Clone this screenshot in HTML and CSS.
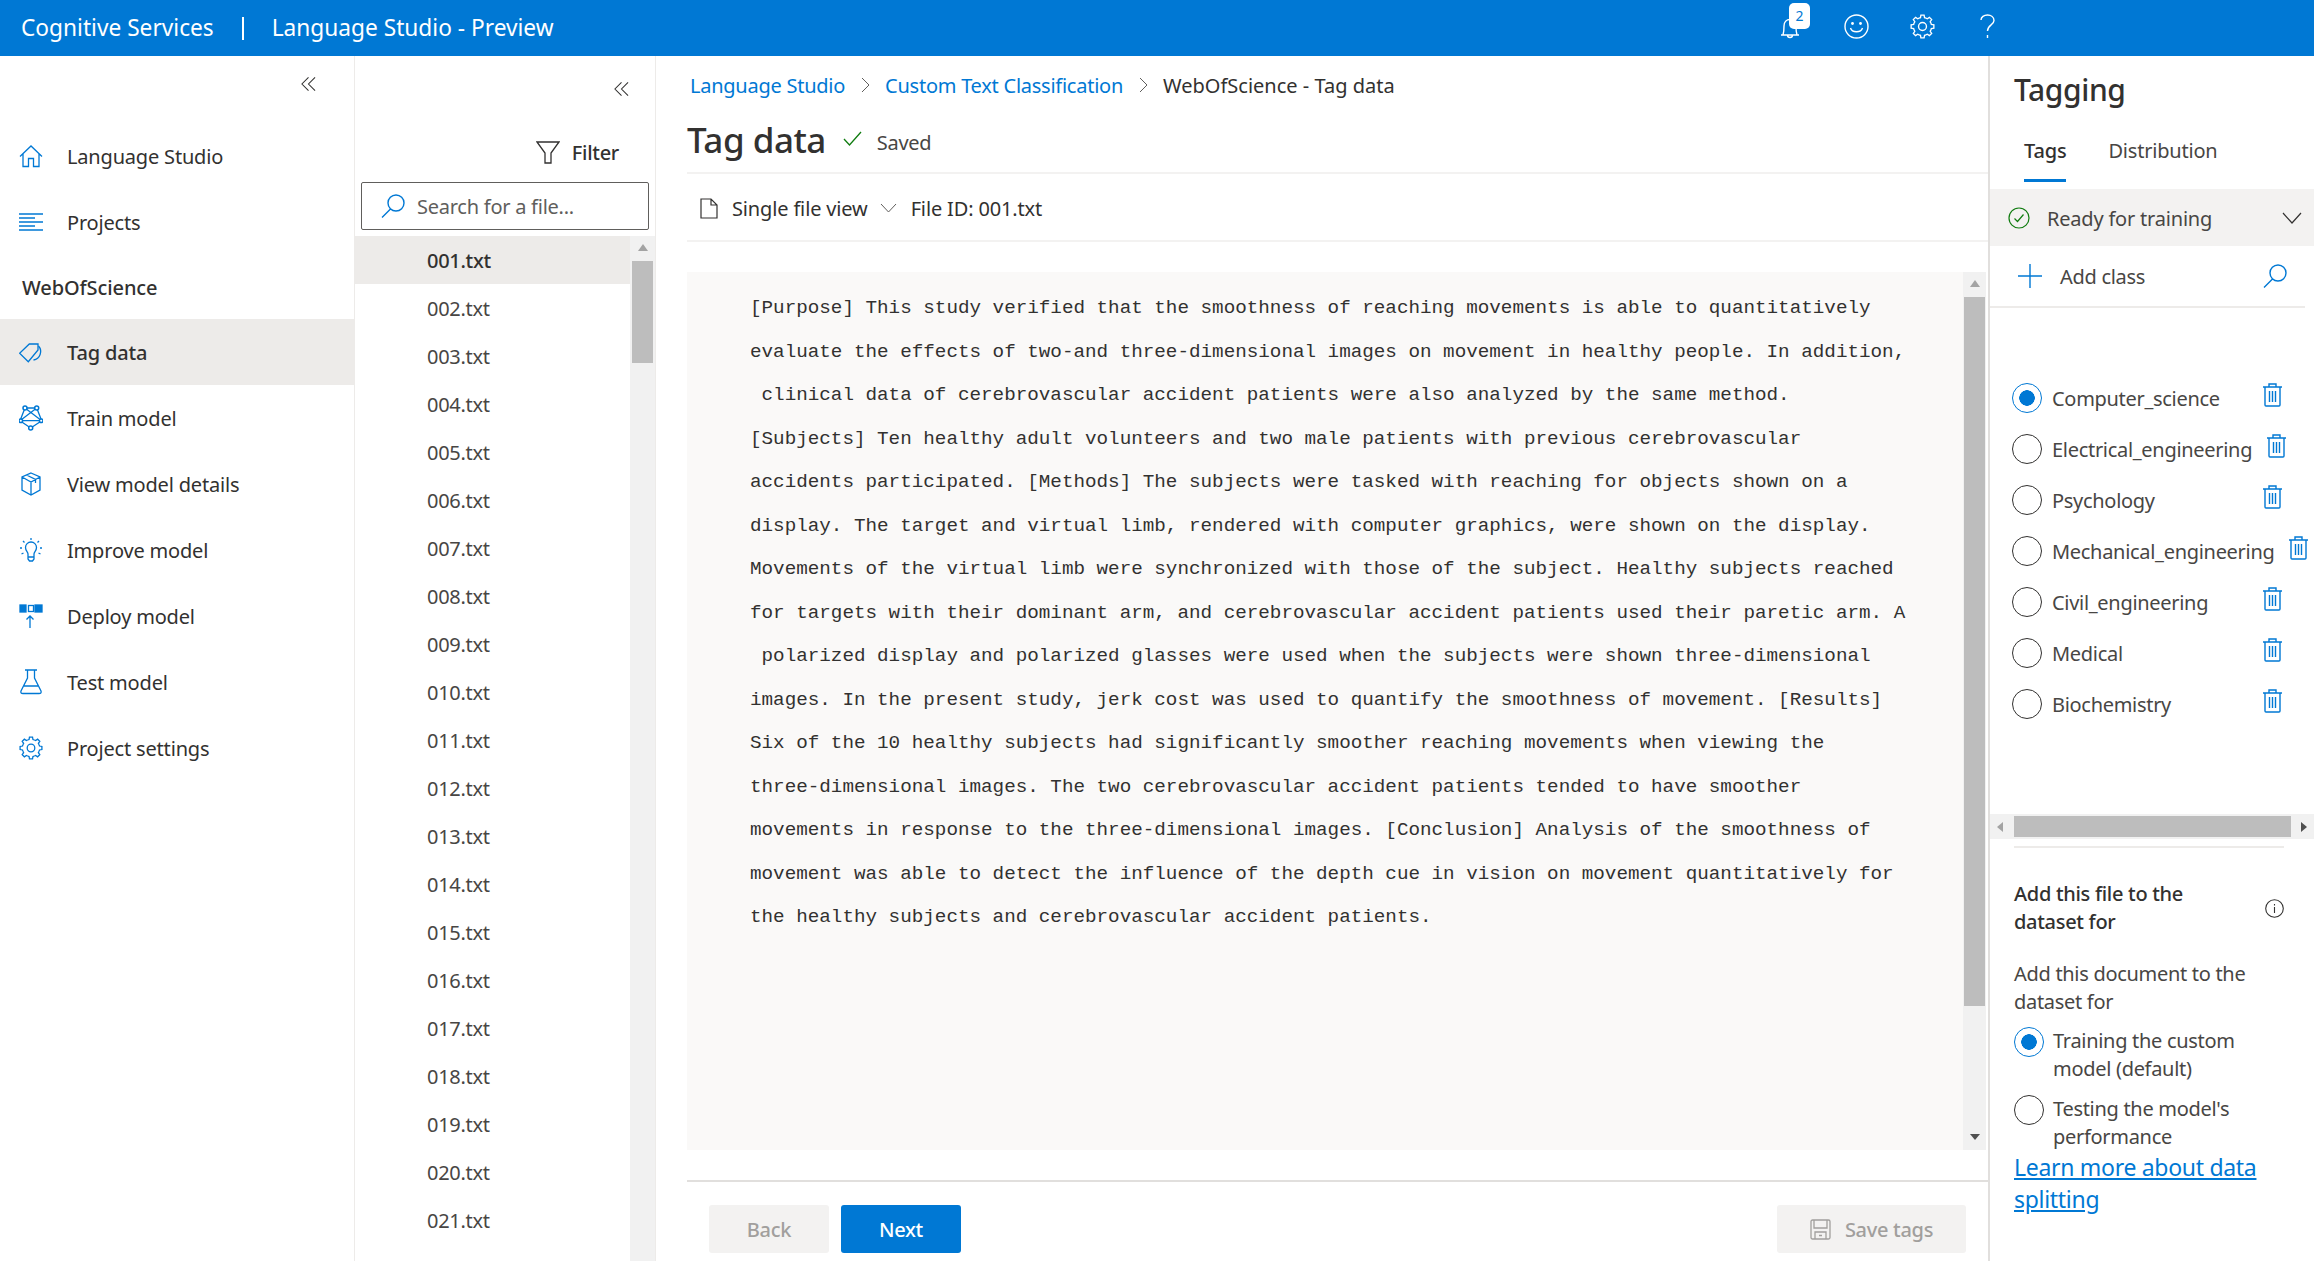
FILE: index.html
```html
<!DOCTYPE html>
<html lang="en">
<head>
    <meta charset="UTF-8">
    <title>Language Studio - Preview</title>
    <link rel="stylesheet" href="styles.css">
</head>
<body>
    <svg class="defs" width="0" height="0">
        <symbol id="gear" viewBox="0 0 24 24">
            <g fill="none" stroke="currentColor" stroke-width="1.3">
                <path d="M8.67 3.96L10.04 3.52L10.47 1.1H13.53L13.96 3.52L15.33 3.96"/>
                <path transform="rotate(45 12 12)" d="M8.67 3.96L10.04 3.52L10.47 1.1H13.53L13.96 3.52L15.33 3.96"/>
                <path transform="rotate(90 12 12)" d="M8.67 3.96L10.04 3.52L10.47 1.1H13.53L13.96 3.52L15.33 3.96"/>
                <path transform="rotate(135 12 12)" d="M8.67 3.96L10.04 3.52L10.47 1.1H13.53L13.96 3.52L15.33 3.96"/>
                <path transform="rotate(180 12 12)" d="M8.67 3.96L10.04 3.52L10.47 1.1H13.53L13.96 3.52L15.33 3.96"/>
                <path transform="rotate(225 12 12)" d="M8.67 3.96L10.04 3.52L10.47 1.1H13.53L13.96 3.52L15.33 3.96"/>
                <path transform="rotate(270 12 12)" d="M8.67 3.96L10.04 3.52L10.47 1.1H13.53L13.96 3.52L15.33 3.96"/>
                <path transform="rotate(315 12 12)" d="M8.67 3.96L10.04 3.52L10.47 1.1H13.53L13.96 3.52L15.33 3.96"/>
                <circle cx="12" cy="12" r="3.8"/>
            </g>
        </symbol>
        <symbol id="trash" viewBox="0 0 19 24">
            <path fill="none" stroke="currentColor" stroke-width="1.4" d="M0 4H19M6 4V1H13V4M2 4V22A1 1 0 0 0 3 23H16A1 1 0 0 0 17 22V4M6.5 8V19M9.5 8V19M12.5 8V19"/>
        </symbol>
        <symbol id="lens" viewBox="0 0 24 24">
            <path fill="none" stroke="currentColor" stroke-width="1.4" d="M15 1A8 8 0 1 1 15 17A8 8 0 1 1 15 1ZM9.5 15L1 23.5"/>
        </symbol>
        <symbol id="dblchev" viewBox="0 0 16 16">
            <path fill="none" stroke="currentColor" stroke-width="1.1" d="M8 1L1 8L8 15M15 1L8 8L15 15"/>
        </symbol>
    </svg>

    <header class="topbar">
        <span class="brand">Cognitive Services</span>
        <span class="brand-sep"></span>
        <span class="brand">Language Studio - Preview</span>
        <div class="top-icons">
            <span class="bell">
                <svg width="20" height="22" viewBox="0 0 20 22"><path fill="none" stroke="#fff" stroke-width="1.4" d="M1 18H19M3 18C4 15 4 12 4 9C4 5 6.5 2.5 10 2.5C13.5 2.5 16 5 16 9C16 12 16 15 17 18M7.5 18A2.5 2.5 0 0 0 12.5 18"/></svg>
                <span class="badge">2</span>
            </span>
            <svg class="top-smile" width="25" height="25" viewBox="0 0 25 25"><g fill="none" stroke="#fff" stroke-width="1.4"><circle cx="12.5" cy="12.5" r="11.5"/><path d="M6.5 14C8 19 17 19 18.5 14"/></g><circle cx="8.5" cy="9.5" r="1.4" fill="#fff"/><circle cx="16.5" cy="9.5" r="1.4" fill="#fff"/></svg>
            <svg class="top-gear" width="25" height="25"><use href="#gear"/></svg>
            <svg class="top-help" width="15" height="25" viewBox="0 0 15 25"><path fill="none" stroke="#fff" stroke-width="1.4" d="M1 6C1 3 4 1 7.5 1C11 1 14 3 14 6.5C14 11 7.5 11 7.5 17M7.5 21V24"/></svg>
        </div>
    </header>

    <div class="app">
        <nav class="sidenav">
            <div class="collapse-row">
                <svg class="dblchev" width="15" height="16"><use href="#dblchev"/></svg>
            </div>
            <a class="nav-item">
                <svg width="24" height="24" viewBox="0 0 24 24"><path d="M1 12.5L12 2L23 12.5M4 10V22.5H9.5V14.5H14.5V22.5H20V10"/></svg>
                Language Studio
            </a>
            <a class="nav-item">
                <svg width="24" height="24" viewBox="0 0 24 24"><path d="M0 4H24M0 8H16M0 12H24M0 16H16M0 20H24"/></svg>
                Projects
            </a>
            <div class="nav-project">WebOfScience</div>
            <a class="nav-item active">
                <svg width="24" height="24" viewBox="0 0 24 24"><path d="M10.3 4H19V10L9.3 21.7L0.6 13.3Z"/><path d="M19.5 6A8.5 8.5 0 0 1 14.5 20"/></svg>
                Tag data
            </a>
            <a class="nav-item">
                <svg width="24" height="26" viewBox="0 0 24 26"><path d="M6 3H17.7L22.7 15.7L11.7 23L1 15.7ZM6 3L22.7 15.7M17.7 3L1 15.7M1 15.7H22.7"/><g class="nodes"><circle cx="6" cy="3" r="2"/><circle cx="17.7" cy="3" r="2"/><circle cx="1.8" cy="15.7" r="1.8"/><circle cx="22.2" cy="15.7" r="1.8"/><circle cx="11.7" cy="23" r="2"/></g></svg>
                Train model
            </a>
            <a class="nav-item">
                <svg width="24" height="24" viewBox="0 0 24 24"><path d="M12 1L21 5V18L12 23L3 18V5ZM3 5L12 10L21 5M12 10V23M7.5 3L16.5 7.5V11"/></svg>
                View model details
            </a>
            <a class="nav-item">
                <svg width="24" height="26" viewBox="0 0 24 26"><path d="M9 20V17C9 15 6.5 14 6.5 10.5A5.5 5.5 0 0 1 17.5 10.5C17.5 14 15 15 15 17V20ZM9 20V22L10.5 24H13.5L15 22V20M12 1V3M4 4L5.5 5.5M20 4L18.5 5.5M1 11H3M21 11H23M2.5 17L4.5 16M21.5 17L19.5 16"/></svg>
                Improve model
            </a>
            <a class="nav-item">
                <svg width="24" height="24" viewBox="0 0 24 24"><rect x="1" y="1" width="6" height="7" fill="#0078d4"/><rect x="9.5" y="1.5" width="5" height="6"/><rect x="16" y="1" width="7" height="7" fill="#0078d4"/><path d="M11 24V12M7.5 15.5L11 12L14.5 15.5"/></svg>
                Deploy model
            </a>
            <a class="nav-item">
                <svg width="24" height="26" viewBox="0 0 24 26"><path d="M6 1H18M8.5 1V9L2 22C1.5 23.5 2 24.5 4 24.5H20C22 24.5 22.5 23.5 22 22L15.5 9V1M5 17H19"/></svg>
                Test model
            </a>
            <a class="nav-item">
                <svg class="nav-gear" width="24" height="24"><use href="#gear"/></svg>
                Project settings
            </a>
        </nav>

        <aside class="filepanel">
            <div class="collapse-row files">
                <svg class="dblchev" width="15" height="16"><use href="#dblchev"/></svg>
            </div>
            <div class="filter-row">
                <svg width="24" height="24" viewBox="0 0 24 24"><path fill="none" stroke="#323130" stroke-width="1.3" d="M1 2H23L15 13V23H9V13Z"/></svg>
                <span>Filter</span>
            </div>
            <div class="searchbox">
                <svg class="lens" width="24" height="24"><use href="#lens"/></svg>
                <span>Search for a file...</span>
            </div>
            <div class="filelist-wrap">
                <ul class="filelist">
                    <li class="current">001.txt</li>
                    <li>002.txt</li>
                    <li>003.txt</li>
                    <li>004.txt</li>
                    <li>005.txt</li>
                    <li>006.txt</li>
                    <li>007.txt</li>
                    <li>008.txt</li>
                    <li>009.txt</li>
                    <li>010.txt</li>
                    <li>011.txt</li>
                    <li>012.txt</li>
                    <li>013.txt</li>
                    <li>014.txt</li>
                    <li>015.txt</li>
                    <li>016.txt</li>
                    <li>017.txt</li>
                    <li>018.txt</li>
                    <li>019.txt</li>
                    <li>020.txt</li>
                    <li>021.txt</li>
                </ul>
                <div class="vscroll list-scroll">
                    <i class="arrow-up"></i>
                    <b class="thumb"></b>
                </div>
            </div>
        </aside>

        <main class="content">
            <div class="breadcrumb">
                <a>Language Studio</a>
                <svg width="9" height="16" viewBox="0 0 9 16"><path fill="none" stroke="#605e5c" stroke-width="1" d="M1 1L8 8L1 15"/></svg>
                <a>Custom Text Classification</a>
                <svg width="9" height="16" viewBox="0 0 9 16"><path fill="none" stroke="#605e5c" stroke-width="1" d="M1 1L8 8L1 15"/></svg>
                <span>WebOfScience - Tag data</span>
            </div>
            <div class="title-row">
                <h1>Tag data</h1>
                <svg width="19" height="16" viewBox="0 0 19 16"><path fill="none" stroke="#107c10" stroke-width="1.3" d="M1 8L6.5 14L18 1"/></svg>
                <span>Saved</span>
            </div>
            <div class="view-row">
                <svg width="18" height="21" viewBox="0 0 18 21"><path fill="none" stroke="#323130" stroke-width="1.2" d="M1 1H11L17 7V20H1ZM11 1V7H17"/></svg>
                <span class="view-name">Single file view</span>
                <svg width="17" height="10" viewBox="0 0 17 10"><path fill="none" stroke="#605e5c" stroke-width="1" d="M1 1L8.5 9L16 1"/></svg>
                <span class="view-id">File ID: 001.txt</span>
            </div>
            <div class="doc">
                <div class="doc-text">
                    <p>[Purpose] This study verified that the smoothness of reaching movements is able to quantitatively</p>
                    <p>evaluate the effects of two-and three-dimensional images on movement in healthy people. In addition,</p>
                    <p> clinical data of cerebrovascular accident patients were also analyzed by the same method.</p>
                    <p>[Subjects] Ten healthy adult volunteers and two male patients with previous cerebrovascular</p>
                    <p>accidents participated. [Methods] The subjects were tasked with reaching for objects shown on a</p>
                    <p>display. The target and virtual limb, rendered with computer graphics, were shown on the display.</p>
                    <p>Movements of the virtual limb were synchronized with those of the subject. Healthy subjects reached</p>
                    <p>for targets with their dominant arm, and cerebrovascular accident patients used their paretic arm. A</p>
                    <p> polarized display and polarized glasses were used when the subjects were shown three-dimensional</p>
                    <p>images. In the present study, jerk cost was used to quantify the smoothness of movement. [Results]</p>
                    <p>Six of the 10 healthy subjects had significantly smoother reaching movements when viewing the</p>
                    <p>three-dimensional images. The two cerebrovascular accident patients tended to have smoother</p>
                    <p>movements in response to the three-dimensional images. [Conclusion] Analysis of the smoothness of</p>
                    <p>movement was able to detect the influence of the depth cue in vision on movement quantitatively for</p>
                    <p>the healthy subjects and cerebrovascular accident patients.</p>
                </div>
                <div class="vscroll doc-scroll">
                    <i class="arrow-up"></i>
                    <b class="thumb"></b>
                    <i class="arrow-down"></i>
                </div>
            </div>
            <div class="actions">
                <button class="btn disabled">Back</button>
                <button class="btn primary">Next</button>
                <button class="btn disabled save">
                    <svg width="21" height="21" viewBox="0 0 21 21"><path fill="none" stroke="#a19f9d" stroke-width="1.3" d="M1 2.5A1.5 1.5 0 0 1 2.5 1H18.5A1.5 1.5 0 0 1 20 2.5V18.5A1.5 1.5 0 0 1 18.5 20H2.5A1.5 1.5 0 0 1 1 18.5ZM4 1V9H17V1M5 20V13H16V20M9 16.5H12"/></svg>
                    Save tags
                </button>
            </div>
        </main>

        <aside class="tagpanel">
            <h2>Tagging</h2>
            <div class="tabs">
                <span class="tab selected">Tags</span>
                <span class="tab">Distribution</span>
            </div>
            <div class="ready-row">
                <svg width="22" height="22" viewBox="0 0 22 22"><circle cx="11" cy="11" r="10" fill="none" stroke="#107c10" stroke-width="1.2"/><path fill="none" stroke="#107c10" stroke-width="1.2" d="M6.5 11.5L9.5 14.5L15.5 7.5"/></svg>
                <span>Ready for training</span>
                <svg class="ready-chev" width="20" height="12" viewBox="0 0 20 12"><path fill="none" stroke="#323130" stroke-width="1.2" d="M1 1L10 11L19 1"/></svg>
            </div>
            <div class="add-row">
                <svg width="24" height="24" viewBox="0 0 24 24"><path fill="none" stroke="#0078d4" stroke-width="1.4" d="M0 12H24M12 0V24"/></svg>
                <span>Add class</span>
                <svg class="lens" width="24" height="24"><use href="#lens"/></svg>
            </div>
            <ul class="classes">
                <li><i class="radio on"></i><span class="cname">Computer_science</span><svg class="trash" width="19" height="24"><use href="#trash"/></svg></li>
                <li><i class="radio"></i><span class="cname">Electrical_engineering</span><svg class="trash" width="19" height="24"><use href="#trash"/></svg></li>
                <li><i class="radio"></i><span class="cname">Psychology</span><svg class="trash" width="19" height="24"><use href="#trash"/></svg></li>
                <li><i class="radio"></i><span class="cname">Mechanical_engineering</span><svg class="trash" width="19" height="24"><use href="#trash"/></svg></li>
                <li><i class="radio"></i><span class="cname">Civil_engineering</span><svg class="trash" width="19" height="24"><use href="#trash"/></svg></li>
                <li><i class="radio"></i><span class="cname">Medical</span><svg class="trash" width="19" height="24"><use href="#trash"/></svg></li>
                <li><i class="radio"></i><span class="cname">Biochemistry</span><svg class="trash" width="19" height="24"><use href="#trash"/></svg></li>
            </ul>
            <div class="hscroll">
                <i class="arrow-left"></i>
                <b class="hthumb"></b>
                <i class="arrow-right"></i>
            </div>
            <div class="dataset">
                <div class="dataset-head">
                    <h3>Add this file to the dataset for</h3>
                    <svg width="19" height="19" viewBox="0 0 19 19"><circle cx="9.5" cy="9.5" r="8.8" fill="none" stroke="#323130" stroke-width="1.1"/><path fill="none" stroke="#323130" stroke-width="1.1" d="M9.5 8V14M9.5 5V6.4"/></svg>
                </div>
                <p>Add this document to the dataset for</p>
                <div class="opt"><i class="radio on"></i><span>Training the custom model (default)</span></div>
                <div class="opt"><i class="radio"></i><span>Testing the model's performance</span></div>
                <a class="learn">Learn more about data splitting</a>
            </div>
        </aside>
    </div>
</body>
</html>
```

FILE: styles.css
```css
* {
    box-sizing: border-box;
}
html, body {
    margin: 0;
    height: 100%;
    overflow: hidden;
}
body {
    width: 2314px;
    height: 1261px;
    font-family: "Noto Sans", sans-serif;
    font-size: 20px;
    color: #323130;
    background: #fff;
    display: flex;
    flex-direction: column;
}
ul {
    list-style: none;
    margin: 0;
    padding: 0;
}
.defs {
    position: absolute;
}

/* top bar */
.topbar {
    height: 56px;
    flex: none;
    background: #0078d4;
    color: #fff;
    display: flex;
    align-items: center;
    padding-left: 21px;
}
.brand {
    font-size: 22.7px;
    padding-bottom: 2px;
}
.brand-sep {
    width: 2px;
    height: 23px;
    background: #fff;
    margin: 0 28px;
}
.top-icons {
    margin-left: auto;
    display: flex;
    align-items: center;
    padding-right: 319px;
    padding-bottom: 3px;
}
.bell {
    position: relative;
    width: 20px;
    height: 24px;
    margin-right: 44px;
    display: flex;
    align-items: flex-end;
}
.badge {
    position: absolute;
    left: 9px;
    top: -12px;
    width: 21px;
    height: 26px;
    background: #fff;
    color: #0078d4;
    border-radius: 5px;
    font-size: 14px;
    line-height: 26px;
    text-align: center;
}
.top-smile {
    margin-right: 41px;
}
.top-gear {
    color: #fff;
    margin-right: 45px;
}

/* layout */
.app {
    flex: 1;
    display: flex;
    min-height: 0;
}

/* left nav */
.sidenav {
    width: 355px;
    flex: none;
    border-right: 1px solid #edebe9;
}
.collapse-row {
    height: 67px;
    display: flex;
    justify-content: flex-end;
    align-items: flex-start;
    padding: 20px 38px 0 0;
}
.dblchev {
    color: #323130;
}
.nav-item {
    height: 66px;
    display: flex;
    align-items: center;
    gap: 24px;
    padding-left: 19px;
    letter-spacing: -0.18px;
}
.nav-item svg {
    flex: none;
    fill: none;
    stroke: #0078d4;
    stroke-width: 1.3;
}
.nav-item svg .nodes {
    fill: #fff;
    stroke-width: 1.5;
}
.nav-item .nav-gear {
    color: #0078d4;
    stroke: none;
}
.nav-item.active {
    background: #edebe9;
    font-weight: 500;
}
.nav-project {
    height: 64px;
    padding-left: 22px;
    display: flex;
    align-items: center;
    font-weight: 500;
    letter-spacing: -0.1px;
}

/* file list */
.filepanel {
    width: 301px;
    flex: none;
    border-right: 1px solid #edebe9;
    display: flex;
    flex-direction: column;
}
.collapse-row.files {
    height: 58px;
    flex: none;
    padding: 25px 26px 0 0;
}
.filter-row {
    height: 68px;
    display: flex;
    justify-content: flex-end;
    align-items: center;
    gap: 12px;
    padding: 8px 36px 0 0;
    font-weight: 500;
    letter-spacing: -0.3px;
}
.searchbox {
    height: 48px;
    flex: none;
    margin: 0 6px;
    border: 1px solid #605e5c;
    border-radius: 2px;
    display: flex;
    align-items: center;
    gap: 12px;
    padding-left: 19px;
    color: #605e5c;
    letter-spacing: -0.25px;
}
.lens {
    color: #0078d4;
    flex: none;
}
.filelist-wrap {
    flex: 1;
    min-height: 0;
    margin-top: 6px;
    display: flex;
    overflow: hidden;
}
.filelist {
    flex: 1;
}
.filelist li {
    height: 48px;
    line-height: 50px;
    padding-left: 72px;
    color: #484644;
    letter-spacing: -0.3px;
}
.filelist li.current {
    background: #edebe9;
    color: #323130;
    font-weight: 500;
}
.vscroll {
    background: #f1f1f1;
    flex: none;
    display: flex;
    flex-direction: column;
    align-items: center;
}
.list-scroll {
    width: 25px;
}
.thumb {
    display: block;
    width: 21px;
    background: #bdbdbd;
}
.list-scroll .thumb {
    height: 102px;
}
.arrow-up {
    flex: none;
    display: block;
    margin-top: 8px;
    width: 0;
    height: 0;
    border: 5px solid transparent;
    border-top: 0;
    border-bottom: 7px solid #a3a3a3;
    margin-bottom: 10px;
}
.arrow-down {
    width: 0;
    height: 0;
    border: 5px solid transparent;
    border-bottom: 0;
    border-top: 6px solid #505050;
    margin-top: auto;
    margin-bottom: 10px;
}

/* main column */
.content {
    flex: 1;
    min-width: 0;
    display: flex;
    flex-direction: column;
    padding-left: 31px;
}
.breadcrumb {
    height: 58px;
    flex: none;
    display: flex;
    align-items: center;
    padding-left: 3px;
}
.breadcrumb a {
    color: #0078d4;
    letter-spacing: -0.25px;
}
.breadcrumb svg {
    margin: 0 15.5px;
}
.title-row {
    height: 60px;
    flex: none;
    display: flex;
    align-items: center;
    border-bottom: 2px solid #f3f2f1;
    padding-bottom: 8px;
}
.title-row h1 {
    margin: 0 17px 0 0;
    font-size: 35px;
    font-weight: 500;
    letter-spacing: -0.5px;
}
.title-row span {
    margin-left: 15px;
    color: #484644;
    letter-spacing: -0.3px;
    padding-top: 6px;
}
.view-row {
    height: 68px;
    flex: none;
    display: flex;
    align-items: center;
    border-bottom: 2px solid #f3f2f1;
    padding: 2px 0 0 13px;
    letter-spacing: -0.15px;
}
.view-name {
    margin-left: 14px;
    margin-right: 12px;
}
.view-id {
    margin-left: 14px;
}
.doc {
    height: 878px;
    flex: none;
    margin: 30px 2px 0 0;
    background: #faf9f8;
    display: flex;
}
.doc-text {
    flex: 1;
    padding: 15px 0 0 63px;
    font-family: "Liberation Mono", monospace;
    font-size: 19.25px;
    line-height: 43.5px;
    color: #323130;
}
.doc-text p {
    margin: 0;
    white-space: pre;
}
.doc-scroll {
    width: 23px;
}
.doc-scroll .thumb {
    height: 709px;
}
.actions {
    height: 81px;
    flex: none;
    margin-top: 30px;
    border-top: 2px solid #e1dfdd;
    display: flex;
    gap: 12px;
    padding: 23px 22px 0 22px;
}
.btn {
    width: 120px;
    height: 48px;
    border: 0;
    border-radius: 3px;
    font-family: inherit;
    font-size: 20px;
    font-weight: 500;
    letter-spacing: -0.3px;
}
.btn.disabled {
    background: #f3f2f1;
    color: #a19f9d;
}
.btn.primary {
    background: #0078d4;
    color: #fff;
}
.btn.save {
    width: 189px;
    margin-left: auto;
    display: flex;
    align-items: center;
    justify-content: center;
    gap: 14px;
}

/* tagging panel */
.tagpanel {
    width: 326px;
    flex: none;
    border-left: 2px solid #e1dfdd;
    display: flex;
    flex-direction: column;
}
.tagpanel h2 {
    margin: 0;
    height: 66px;
    padding-left: 24px;
    font-size: 30px;
    font-weight: 500;
    letter-spacing: -0.4px;
    line-height: 68px;
}
.tabs {
    height: 60px;
    flex: none;
    display: flex;
    padding: 0 0 0 34px;
    gap: 42px;
    margin-bottom: 7px;
}
.tab {
    height: 60px;
    line-height: 57px;
    color: #484644;
    letter-spacing: -0.2px;
    border-bottom: 3px solid transparent;
}
.tab.selected {
    color: #323130;
    font-weight: 500;
    border-bottom-color: #0078d4;
}
.ready-row {
    height: 57px;
    flex: none;
    background: #f3f2f1;
    display: flex;
    align-items: center;
    padding: 0 12px 0 18px;
    color: #484644;
    letter-spacing: -0.2px;
}
.ready-row span {
    margin-left: 17px;
    padding-top: 2px;
}
.ready-chev {
    margin-left: auto;
}
.add-row {
    height: 62px;
    flex: none;
    margin-right: 9px;
    border-bottom: 2px solid #edebe9;
    display: flex;
    align-items: center;
    padding: 0 18px 0 28px;
    letter-spacing: -0.3px;
    color: #484644;
}
.add-row span {
    margin-left: 18px;
}
.add-row .lens {
    margin-left: auto;
}
.classes {
    margin-top: 75px;
    height: 431px;
    flex: none;
}
.classes li {
    height: 51px;
    display: flex;
    align-items: flex-start;
    padding-left: 22px;
    color: #484644;
    letter-spacing: -0.3px;
}
.radio {
    display: block;
    width: 30px;
    height: 30px;
    flex: none;
    border: 1.5px solid #323130;
    border-radius: 50%;
}
.radio.on {
    border-color: #0078d4;
    background: radial-gradient(circle, #0078d4 0 7.5px, transparent 8px);
}
.cname {
    margin-left: 10px;
    min-width: 196px;
    margin-right: 15px;
    line-height: 32px;
}
.trash {
    color: #0078d4;
    flex: none;
}
.hscroll {
    height: 25px;
    flex: none;
    background: #f1f1f1;
    display: flex;
    align-items: center;
    padding: 0 7px;
}
.hthumb {
    display: block;
    width: 277px;
    height: 21px;
    background: #bdbdbd;
    margin: 0 auto;
}
.arrow-left {
    width: 0;
    height: 0;
    border: 5px solid transparent;
    border-left: 0;
    border-right: 6px solid #a3a3a3;
}
.arrow-right {
    width: 0;
    height: 0;
    border: 5px solid transparent;
    border-right: 0;
    border-left: 6px solid #505050;
}
.dataset {
    margin: 7px 30px 0 24px;
    border-top: 2px solid #edebe9;
    color: #484644;
    letter-spacing: -0.3px;
    line-height: 28px;
    padding-top: 32px;
}
.dataset-head {
    display: flex;
    justify-content: space-between;
    align-items: center;
}
.dataset-head h3 {
    margin: 0;
    width: 230px;
    font-size: 20px;
    font-weight: 500;
    color: #323130;
}
.dataset p {
    margin: 24px 0 11px;
    width: 260px;
}
.opt {
    display: flex;
    gap: 9px;
    margin-bottom: 12px;
    width: 260px;
}
.learn {
    display: block;
    color: #0078d4;
    text-decoration: underline;
    font-size: 23px;
    line-height: 32px;
    margin-top: -12px;
    width: 270px;
}
```
